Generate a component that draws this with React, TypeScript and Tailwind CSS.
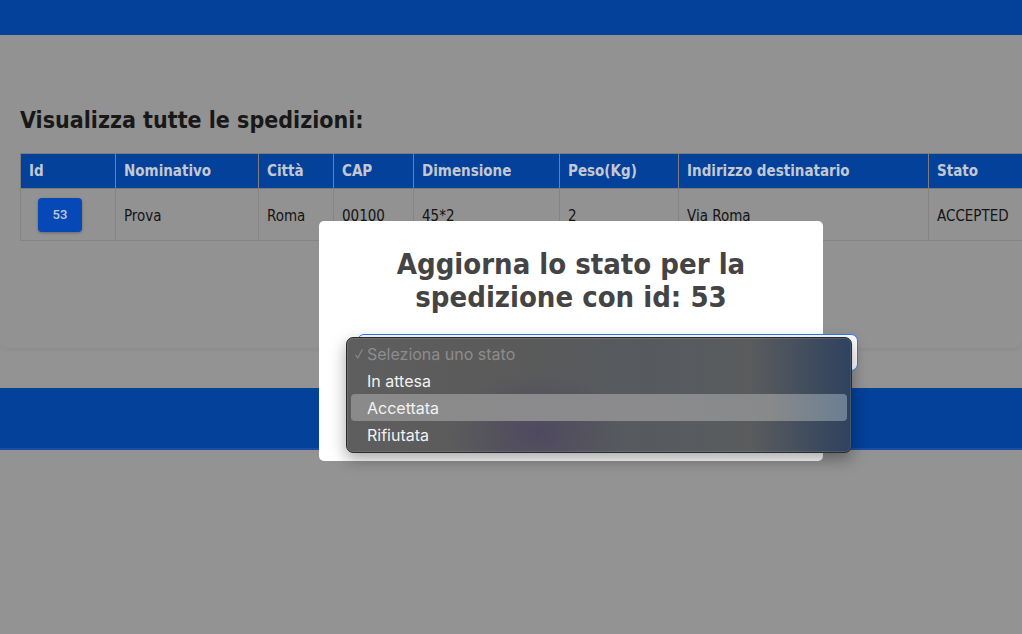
import React from 'react';

const columns = ['Id', 'Nominativo', 'Città', 'CAP', 'Dimensione', 'Peso(Kg)', 'Indirizzo destinatario', 'Stato'];
const widths = ['w-[95px]', 'w-[143px]', 'w-[75px]', 'w-[80px]', 'w-[146px]', 'w-[119px]', 'w-[250px]', 'w-[120px]'];

const row = ['Prova', 'Roma', '00100', '45*2', '2', 'Via Roma', 'ACCEPTED'];

const options = [
    { label: 'Seleziona uno stato', disabled: true, checked: true },
    { label: 'In attesa' },
    { label: 'Accettata', active: true },
    { label: 'Rifiutata' },
];

export default function App() {
    return (
        <div className="relative w-[1022px] h-[634px] overflow-hidden bg-[#939393] font-['DejaVu_Sans_Condensed','DejaVu_Sans',sans-serif]">

            {/* Navbar */}
            <div className="h-[35px] bg-[#03419a]" />

            {/* ── Card with table ── */}
            <div className="rounded-b-lg bg-[#929292] shadow-[0_2px_4px_rgba(0,0,0,0.06)] pt-[71px] pb-[107px] pl-[20px]">
                <h2 className="text-[23px] font-bold text-[#181818] leading-[29px] mb-[18px]">
                    Visualizza tutte le spedizioni:
                </h2>

                <table className="border-collapse table-fixed w-[1028px] text-[15px]">
                    <thead>
                        <tr className="bg-[#03419a] h-[35px]">
                            {columns.map((c, i) => (
                                <th
                                    key={c}
                                    className={`${widths[i]} border border-[#7d7d7d] text-left font-bold text-[#c3c8d2] px-[8px]`}
                                >
                                    {c}
                                </th>
                            ))}
                        </tr>
                    </thead>
                    <tbody>
                        <tr className="h-[52px]">
                            <td className="border border-[#848484] pl-[17px]">
                                <span className="inline-flex items-center justify-center w-[44px] h-[34px] rounded-[4px] bg-[#0648b6] shadow-[0_1px_3px_rgba(0,0,0,0.3)] text-[#c2c9d6] text-[13px] font-['Roboto',sans-serif] font-medium">
                                    53
                                </span>
                            </td>
                            {row.map((v, i) => (
                                <td key={i} className="border border-[#848484] px-[8px] pt-[3px] text-[#141414]">
                                    {v}
                                </td>
                            ))}
                        </tr>
                    </tbody>
                </table>
            </div>

            {/* Footer band */}
            <div className="mt-[40px] h-[62px] bg-[#03419a] border-b-2 border-[#1a4ea3]" />

            {/* ── Modal ── */}
            <div className="absolute left-[319px] top-[221px] w-[504px] h-[240px] bg-white rounded-[5px]">
                <h3 className="pt-[27px] text-center text-[29px] leading-[33px] font-bold text-[#444444]">
                    Aggiorna lo stato per la
                    <br />
                    spedizione con id: 53
                </h3>

                <div className="mt-[20px] ml-[38px] w-[501px] h-[37px] rounded-[7px] border border-[#2f7bf5] bg-white flex items-center justify-end pr-[5px]">
                    <span className="w-[2px] h-[4px] bg-[#222]" />
                </div>

                {/* Native-looking dropdown */}
                <div className="absolute left-[27px] top-[116px] w-[506px] h-[116px] rounded-[7px] border border-[#2b2b2b] overflow-hidden shadow-[0_6px_16px_rgba(0,0,0,0.35)] bg-[linear-gradient(90deg,#5e5e5e_0%,#5a5a5a_35%,#565a5f_60%,#5a5c5d_80%,#2f425e_100%)]">
                    <div className="absolute inset-0 bg-[radial-gradient(ellipse_90px_60px_at_190px_95px,rgba(70,60,100,0.55),transparent)]" />
                    <div className="absolute inset-0 rounded-[6px] border border-white/10" />
                    <div className="relative pt-[2px] px-[4px] font-['Inter',sans-serif] text-[16px]">
                        {options.map((o) => (
                            <div
                                key={o.label}
                                className={`h-[27px] flex items-center rounded-[4px] ${o.active ? 'bg-[linear-gradient(90deg,#8a8a8a_0%,#8b8b8e_60%,#87898a_85%,#6b7e93_100%)]' : ''}`}
                            >
                                <span className="w-[16px] pl-[4px] flex items-center">
                                    {o.checked && (
                                        <svg width="8" height="10" viewBox="0 0 8 10" fill="none">
                                            <path d="M0.8 6.2 L2.8 9 L7.2 0.8" stroke="#8c8c8c" strokeWidth="1.1" strokeLinecap="round" strokeLinejoin="round" />
                                        </svg>
                                    )}
                                </span>
                                <span className={o.disabled ? 'text-[#8d8d8d]' : 'text-[#f2f2f2]'}>{o.label}</span>
                            </div>
                        ))}
                    </div>
                </div>
            </div>
        </div>
    );
}
